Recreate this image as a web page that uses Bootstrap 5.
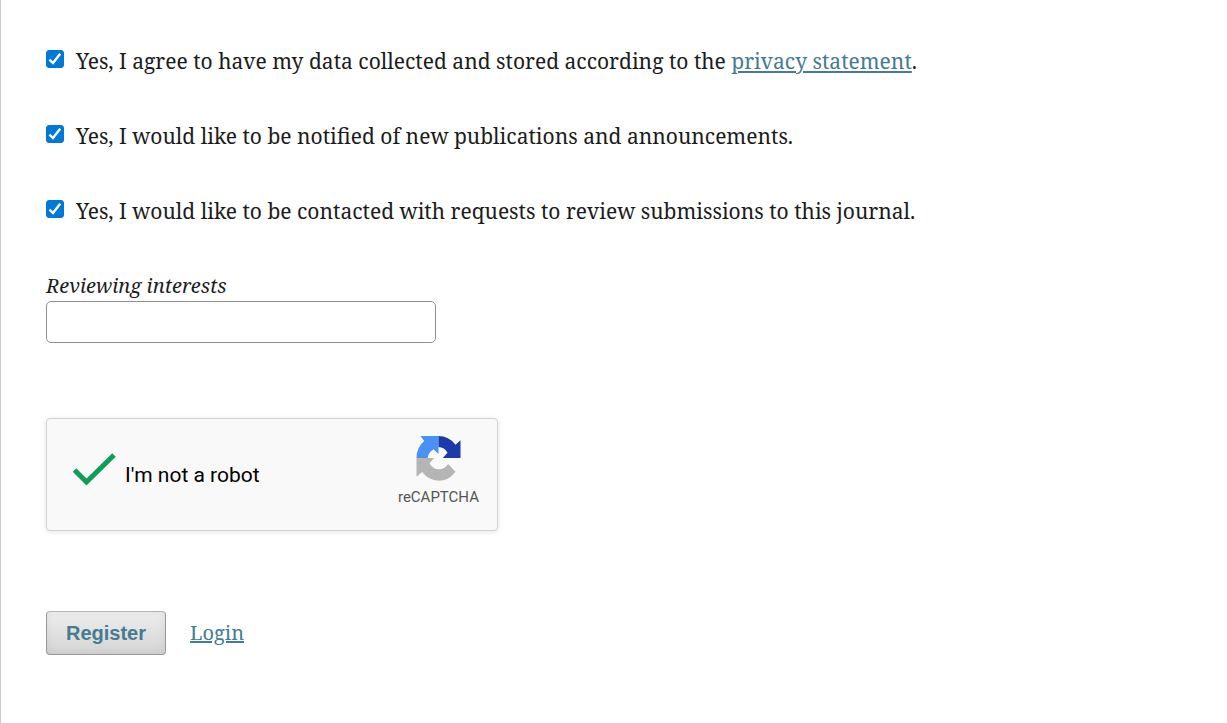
<!DOCTYPE html>
<html lang="en">
<head>
<meta charset="utf-8">
<meta name="viewport" content="width=device-width, initial-scale=1">
<title>Register</title>
<link rel="stylesheet" href="https://cdn.jsdelivr.net/npm/bootstrap@5.3.0/dist/css/bootstrap.min.css">
<style>
body { font-family: "Noto Serif", "Liberation Serif", serif; font-size: 21px; line-height: 30px; color: #1c1c1c; background: #fff; }
.form-panel { border-left: 1px solid #ccc; padding: 46px 45px 68px; }
a { color: #447c92; }
a:hover { color: #2c5c70; }
.consent { margin-bottom: 45px; }
.consent .form-check-input { width: 18px; height: 18px; margin: 4px 12px 0 0; border-radius: 3px; flex: none; }
.consent .form-check-input:checked { background-color: #0078d7; border-color: #0078d7; background-image: url("data:image/svg+xml,%3Csvg xmlns='http://www.w3.org/2000/svg' viewBox='0 0 16 16'%3E%3Cpath fill='none' stroke='%23fff' stroke-width='2.4' d='M2.400 8.600L6 12L13.200 2.800'/%3E%3C/svg%3E"); }
.interests-label { font-size: 20px; font-style: italic; }
.interests-input { max-width: 390px; height: 42px; border: 1px solid #8f8f8f; border-radius: 5px; }
.captcha { max-width: 452px; height: 113px; margin-top: 75px; padding: 0 18px 0 25px; background: #f9f9f9; border: 1px solid #d3d3d3; border-radius: 4px; box-shadow: 0 1px 4px 1px rgba(0,0,0,.08); font-family: Roboto, sans-serif; }
.captcha-tick { margin: 0 9px 10px 0; }
.captcha-text { font-size: 21px; color: #000; }
.captcha-brand { font-size: 15px; line-height: 20px; color: #555; gap: 6px; padding-bottom: 6px; }
.form-actions { margin-top: 80px; gap: 24px; }
.btn-register { height: 44px; padding: 0 19px; font: bold 20px/24px "Liberation Sans", Arial, sans-serif; color: #447c92; background: linear-gradient(#eee, #d4d4d4); border: 1px solid #999; border-top-color: #b5b5b5; border-radius: 4px; box-shadow: inset 0 0 10px rgba(0,0,0,.06); }
.login-link { font-size: 20px; }
</style>
</head>
<body>
<form class="form-panel min-vh-100">
  <div class="consent d-flex align-items-start">
    <input class="form-check-input" type="checkbox" id="privacy" checked>
    <label for="privacy">Yes, I agree to have my data collected and stored according to the <a href="#privacy">privacy statement</a>.</label>
  </div>
  <div class="consent d-flex align-items-start">
    <input class="form-check-input" type="checkbox" id="notify" checked>
    <label for="notify">Yes, I would like to be notified of new publications and announcements.</label>
  </div>
  <div class="consent d-flex align-items-start">
    <input class="form-check-input" type="checkbox" id="review" checked>
    <label for="review">Yes, I would like to be contacted with requests to review submissions to this journal.</label>
  </div>
  <div>
    <label class="interests-label d-block" for="interests">Reviewing interests</label>
    <input class="interests-input form-control" type="text" id="interests">
  </div>
  <div class="captcha d-flex align-items-center">
    <svg class="captcha-tick" width="44" height="34" viewBox="0 0 44 34" aria-hidden="true"><path d="M2.500 17L14.500 29L42 2" fill="none" stroke="#0f9d58" stroke-width="5"/></svg>
    <span class="captcha-text">I'm not a robot</span>
    <div class="captcha-brand ms-auto d-flex flex-column align-items-center">
      <svg width="45" height="45" viewBox="110 78 134 135" role="img" aria-label="reCAPTCHA logo">
        <path fill="#4a90f5" d="M123 78H177V132L162 118Q147 127 144 144H111Q111 112 134 93Z"/>
        <path fill="#1c3aa9" d="M177 78Q208 78 228 104L243 91V144H190L204 128Q195 112 177 111Z"/>
        <path fill="#b5b5b5" d="M111 144H164L150 160Q160 178 178 178Q196 178 206 162L228 185Q208 212 177 212Q148 212 128 186L111 200Z"/>
      </svg>
      <span>reCAPTCHA</span>
    </div>
  </div>
  <div class="form-actions d-flex align-items-center">
    <button class="btn-register" type="submit">Register</button>
    <a class="login-link" href="#login">Login</a>
  </div>
</form>
<script src="https://cdn.jsdelivr.net/npm/bootstrap@5.3.0/dist/js/bootstrap.bundle.min.js"></script>
</body>
</html>
